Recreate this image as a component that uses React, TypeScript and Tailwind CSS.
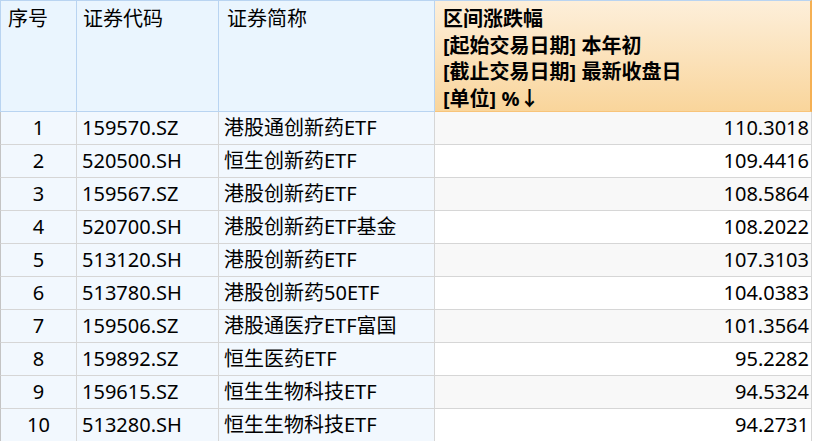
import React from 'react'

interface Row {
  no: number
  code: string
  name: string
  change: string
}

const rows: Row[] = [
  { no: 1, code: '159570.SZ', name: '港股通创新药ETF', change: '110.3018' },
  { no: 2, code: '520500.SH', name: '恒生创新药ETF', change: '109.4416' },
  { no: 3, code: '159567.SZ', name: '港股创新药ETF', change: '108.5864' },
  { no: 4, code: '520700.SH', name: '港股创新药ETF基金', change: '108.2022' },
  { no: 5, code: '513120.SH', name: '港股创新药ETF', change: '107.3103' },
  { no: 6, code: '513780.SH', name: '港股创新药50ETF', change: '104.0383' },
  { no: 7, code: '159506.SZ', name: '港股通医疗ETF富国', change: '101.3564' },
  { no: 8, code: '159892.SZ', name: '恒生医药ETF', change: '95.2282' },
  { no: 9, code: '159615.SZ', name: '恒生生物科技ETF', change: '94.5324' },
  { no: 10, code: '513280.SH', name: '恒生生物科技ETF', change: '94.2731' },
]

const headCell = 'h-[112px] border-t border-r border-b border-t-[#b9d4f1] border-r-[#b9d4f1] border-b-[#b9d4f1] bg-[#eaf5fe] pt-[5px] leading-[26px]'
const bodyCell = 'h-[33px] border-r border-b border-[#d6d6d6] bg-[#f2f8fe] flex items-center'

export default function App() {
  return (
    <div
      className="w-[813px] h-[441px] overflow-hidden bg-white text-[20px] text-black"
      style={{ fontFamily: '"Noto Sans", "Noto Sans CJK SC", sans-serif' }}
    >
      <div className="grid grid-cols-[77px_142px_216px_377px]">
        <div className={`${headCell} border-l border-l-[#b9d4f1] pl-[7px]`}>序号</div>
        <div className={`${headCell} pl-[6px]`}>证券代码</div>
        <div className={`${headCell} pl-[8px]`}>证券简称</div>
        <div className="h-[112px] border-t border-r-2 border-b border-t-[#b9d4f1] border-r-[#f5b053] border-b-[#f8c47a] bg-linear-to-b from-[#fdefda] to-[#f9d59b] pl-[8px] pt-[5px] font-bold leading-[26.5px]">
          <div>区间涨跌幅</div>
          <div>[起始交易日期] 本年初</div>
          <div>[截止交易日期] 最新收盘日</div>
          <div>[单位] %↓</div>
        </div>

        {rows.map((r, i) => (
          <React.Fragment key={r.no}>
            <div className={`${bodyCell} border-l border-l-[#c4c4c4] justify-center`}>{r.no}</div>
            <div className={`${bodyCell} pl-[5px]`}>{r.code}</div>
            <div className={`${bodyCell} pl-[5px]`}>{r.name}</div>
            <div
              className={`h-[33px] border-r border-b border-[#d6d6d6] flex items-center justify-end pr-[2px] ${
                i % 2 === 0 ? 'bg-[#f8f8f8]' : 'bg-white'
              }`}
            >
              {r.change}
            </div>
          </React.Fragment>
        ))}
      </div>
    </div>
  )
}
